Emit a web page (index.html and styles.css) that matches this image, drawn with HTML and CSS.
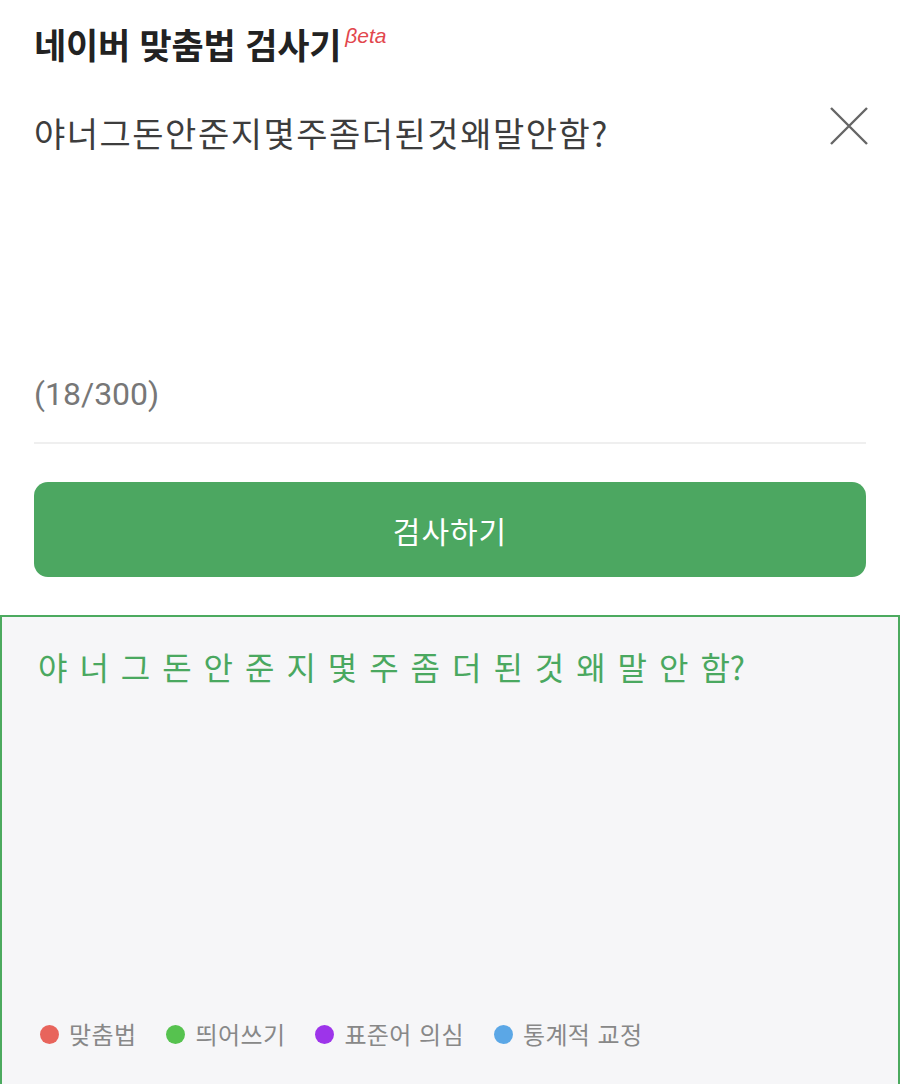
FILE: index.html
```html
<!DOCTYPE html>
<html lang="ko">
<head>
<meta charset="utf-8">
<title>네이버 맞춤법 검사기</title>
<link rel="stylesheet" href="styles.css">
</head>
<body>
<div class="page">
  <div class="top">
    <header class="head">
      <h1 class="title">네이버 맞춤법 검사기</h1>
      <span class="beta">βeta</span>
    </header>
    <div class="input-area">
      <div class="input-row">
        <p class="input-text">야너그돈안준지몇주좀더된것왜말안함?</p>
        <button class="close" aria-label="지우기">
          <svg viewBox="0 0 38 38" width="38" height="38"><path d="M1 1 L37 37 M37 1 L1 37" stroke="#666" stroke-width="2.4" fill="none"/></svg>
        </button>
      </div>
      <div class="counter">(18/300)</div>
    </div>
    <button class="check">검사하기</button>
  </div>
  <section class="result">
    <p class="result-text">야 너 그 돈 안 준 지 몇 주 좀 더 된 것 왜 말 안 함?</p>
    <ul class="legend">
      <li class="legend-item"><span class="dot dot-red"></span>맞춤법</li>
      <li class="legend-item"><span class="dot dot-green"></span>띄어쓰기</li>
      <li class="legend-item"><span class="dot dot-purple"></span>표준어 의심</li>
      <li class="legend-item"><span class="dot dot-blue"></span>통계적 교정</li>
    </ul>
  </section>
</div>
</body>
</html>
```

FILE: styles.css
```css
html, body {
  margin: 0;
  padding: 0;
  background: #ffffff;
}
body {
  font-family: Roboto, "Noto Sans CJK KR", sans-serif;
  overflow: hidden;
}
.top {
  padding: 0 34px;
}
.head {
  display: flex;
  align-items: flex-start;
  padding-top: 26px;
}
.title {
  margin: 0;
  font-family: "Noto Sans CJK KR", sans-serif;
  font-size: 35px;
  line-height: 36px;
  font-weight: 700;
  color: #222222;
  letter-spacing: -0.2px;
}
.beta {
  margin-left: 4px;
  margin-top: -1px;
  font-family: "Liberation Sans", sans-serif;
  font-style: italic;
  font-size: 21px;
  line-height: 22px;
  color: #e2474d;
}
.input-area {
  display: flex;
  flex-direction: column;
  border-bottom: 2px solid #efefef;
  padding-bottom: 28px;
  margin-top: 45px;
}
.input-row {
  display: flex;
  justify-content: space-between;
  align-items: flex-start;
  min-height: 267px;
}
.input-text {
  margin: 6px 0 0 0;
  font-family: "Noto Sans CJK KR", sans-serif;
  font-size: 34px;
  line-height: 40px;
  letter-spacing: 1.5px;
  color: #3d3d3d;
}
.close {
  margin: 0 -2px 0 0;
  padding: 0;
  border: 0;
  background: none;
  width: 38px;
  height: 38px;
}
.close svg {
  display: block;
}
.counter {
  font-size: 32px;
  line-height: 40px;
  color: #777777;
}
.check {
  display: block;
  width: 100%;
  height: 95px;
  margin-top: 38px;
  border: 0;
  border-radius: 14px;
  background: #4ca761;
  color: #ffffff;
  font-family: "Noto Sans CJK KR", sans-serif;
  font-size: 30px;
  line-height: 40px;
  letter-spacing: 1px;
}
.result {
  margin-top: 38px;
  box-sizing: border-box;
  width: 900px;
  height: 469px;
  border: 2px solid #4caa5f;
  border-bottom: 0;
  background: #f6f6f8;
  padding: 29px 36px 0 36px;
}
.result-text {
  margin: 0;
  font-family: "Noto Sans CJK KR", sans-serif;
  font-size: 32px;
  line-height: 40px;
  color: #4aa860;
  word-spacing: 3px;
}
.legend {
  list-style: none;
  margin: 333px 0 0 0;
  padding: 0 0 0 2px;
  display: flex;
  gap: 30px;
}
.legend-item {
  display: flex;
  align-items: center;
  gap: 10px;
  font-family: "Noto Sans CJK KR", sans-serif;
  font-size: 24px;
  line-height: 30px;
  letter-spacing: 0.4px;
  color: #888888;
}
.dot {
  display: inline-block;
  width: 19px;
  height: 19px;
  border-radius: 50%;
}
.dot-red { background: #e8645c; }
.dot-green { background: #56c24f; }
.dot-purple { background: #9d34ea; }
.dot-blue { background: #5ba7e6; }
```
